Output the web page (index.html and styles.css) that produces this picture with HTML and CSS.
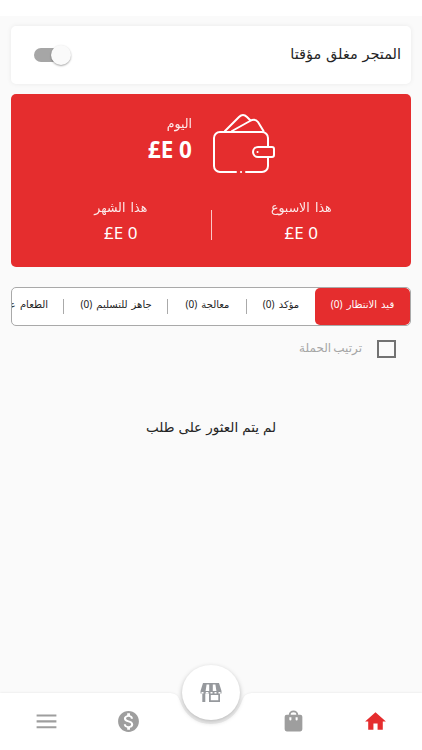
FILE: index.html
```html
<!DOCTYPE html>
<html lang="ar" dir="rtl">
<head>
<meta charset="utf-8">
<meta name="viewport" content="width=device-width, initial-scale=1">
<title>المتجر</title>
<link rel="stylesheet" href="styles.css">
</head>
<body>
<div class="statusbar"></div>
<main class="content">
  <section class="card store">
    <span class="store-title">المتجر مغلق مؤقتا</span>
    <span class="switch"><span class="thumb"></span></span>
  </section>
  <section class="earnings">
    <div class="today">
      <svg class="wallet" viewBox="0 0 64 62" fill="none" stroke="#fff" stroke-width="2" stroke-linecap="round" stroke-linejoin="round">
        <path d="M24 59H8a6 6 0 0 1-6-6V25a6 6 0 0 1 6-6h42a6 6 0 0 1 6 6v8M56 45v8a6 6 0 0 1-6 6H34"/>
        <path d="M29 59h.1M45.500 39h.1"/>
        <path d="M60 34H46a5 5 0 0 0 0 10h14q2 0 2-2v-6q0-2-2-2z"/>
        <path d="M13 18 27 4q4-4 8 0l3.500 3.500M20 18 38 8q5-3 8 1L51.500 18"/>
      </svg>
      <div class="today-text">
        <span class="label label-today">اليوم</span>
        <span class="amount big" dir="ltr">£E 0</span>
      </div>
    </div>
    <div class="periods">
      <div class="period">
        <span class="label label-week">هذا الاسبوع</span>
        <span class="amount" dir="ltr">£E 0</span>
      </div>
      <div class="rule"></div>
      <div class="period">
        <span class="label label-month">هذا الشهر</span>
        <span class="amount" dir="ltr">£E 0</span>
      </div>
    </div>
  </section>
  <nav class="tabs">
    <div class="tab active"><span>قيد الانتظار (0)</span></div>
    <div class="tab confirmed"><span>مؤكد (0)</span></div>
    <div class="tab processing"><span>معالجة (0)</span></div>
    <div class="tab ready"><span>جاهز للتسليم (0)</span></div>
    <div class="tab food"><span>الطعام على الطريق (0)</span></div>
  </nav>
  <div class="campaign">
    <span class="checkbox"></span>
    <span class="campaign-label">ترتيب الحملة</span>
  </div>
  <p class="empty">لم يتم العثور على طلب</p>
</main>
<footer class="bottom">
  <svg class="bottom-shape" viewBox="0 0 422 58"><path d="M0 1H168C175 1 178 3 180 9C185 23 196 32 211 32S237 23 242 9C244 3 247 1 254 1H422V58H0z"/></svg>
  <div class="items">
    <div class="item active-item"><svg viewBox="0 0 24 24"><path d="M10 20v-6h4v6h5v-8h3L12 3 2 12h3v8z"/></svg></div>
    <div class="item"><svg viewBox="0 0 24 24"><path fill-rule="evenodd" d="M18.500 5.500H16.500a4.500 4 0 0 0-9 0H5.500Q3.500 5.500 3.500 7.500v12q0 2 2 2h13q2 0 2-2V7.500q0-2-2-2zM12 3.200A2.700 2.300 0 0 1 14.700 5.500H9.300A2.700 2.300 0 0 1 12 3.200zM10 10a1 1 0 0 1-2 0V8h2zm6 0a1 1 0 0 1-2 0V8h2z"/></svg></div>
    <div class="item"></div>
    <div class="item"><svg viewBox="0 0 24 24"><path d="M12 2C6.480 2 2 6.480 2 12s4.480 10 10 10 10-4.480 10-10S17.520 2 12 2zm1.410 16.090V20h-2.670v-1.930c-1.710-.36-3.160-1.460-3.270-3.400h1.960c.1 1.050.82 1.870 2.650 1.870 1.960 0 2.400-.98 2.400-1.590 0-.83-.44-1.610-2.670-2.140-2.480-.6-4.180-1.620-4.180-3.670 0-1.720 1.390-2.840 3.110-3.210V4h2.670v1.950c1.860.45 2.790 1.860 2.850 3.390H14.300c-.05-1.110-.64-1.870-2.220-1.870-1.500 0-2.400.68-2.400 1.640 0 .84.65 1.390 2.670 1.910s4.180 1.390 4.180 3.910c-.01 1.830-1.380 2.830-3.120 3.160z"/></svg></div>
    <div class="item"><svg viewBox="0 0 24 24"><path d="M2.500 5.200h19v2h-19zM2.500 10.900h19v2h-19zM2.500 16.500h19v2h-19z"/></svg></div>
  </div>
  <div class="fab">
    <svg viewBox="0 0 22 20"><path d="M3 0h16l2.500 8v2.500h-21V8z"/><path d="M2.300 10h3v9h-3zM9 10h11v9H9z"/><path class="cut" d="M6.600 1.500h2.600V8H5.600zM12.800 1.500h2.600L16.400 8h-3.600zM10.800 12h7.500v5.200h-7.500zM1.500 9h2v1.500h-2zM5.800 9h2.600v1.500H5.800zM10.500 9h2v1.500h-2zM14.500 9h2v1.500h-2zM18.500 9h2v1.500h-2z"/></svg>
  </div>
</footer>
</body>
</html>
```
FILE: styles.css
```css
* { box-sizing: border-box; }
body {
  margin: 0;
  height: 750px;
  overflow: hidden;
  display: flex;
  flex-direction: column;
  background: #fafafa;
  color: #242424;
  font-family: "Noto Sans", "DejaVu Sans", sans-serif;
}
.statusbar { height: 16px; background: #fff; flex: none; }
.content { flex: 1; padding: 10px 11px 0; }
.card {
  height: 58px;
  border-radius: 5px;
  background: #fff;
  box-shadow: 0 0 5px rgba(0, 0, 0, .07);
}
.store { display: flex; justify-content: space-between; padding: 0 10px 0 23px; }
.store-title { font-size: 14.5px; line-height: 20px; margin-top: 17px; word-spacing: 1px; white-space: nowrap; }
.switch {
  width: 36px; height: 14px; margin-top: 22px;
  border-radius: 7px; background: #a6a6a6;
  display: flex; align-items: center;
}
.thumb {
  width: 20px; height: 20px; flex: none;
  margin-right: -1px;
  border-radius: 50%; background: #fafafa;
  box-shadow: 0 1px 2px rgba(0, 0, 0, .35);
}
.earnings {
  height: 173px; margin-top: 10px;
  border-radius: 5px; background: #e52d2e; color: #fff;
  padding-top: 19px;
}
.today { height: 85px; display: flex; gap: 20px; padding-right: 135px; }
.wallet { width: 64px; height: 62px; flex: none; }
.today-text { display: flex; flex-direction: column; align-items: flex-start; }
.label { font-size: 12.5px; line-height: 20px; opacity: .9; word-spacing: 2px; white-space: nowrap; }
.amount { font-size: 17px; line-height: 24px; }
.label-today { padding-top: 1px; line-height: 19px; }
.big { font-size: 22.5px; font-weight: 700; line-height: 34px; }
.periods { display: flex; align-items: center; padding: 0 20px; }
.period { flex: 1; display: flex; flex-direction: column; align-items: center; gap: 3px; }
.rule { width: 1px; height: 30px; background: #f9c8c8; margin-top: 6px; }
.tabs {
  height: 39px; margin-top: 20px;
  display: flex;
  border: 1px solid #a9a9a9; border-radius: 5px;
  background: #fff; overflow: hidden;
}
.tab {
  flex: none; display: flex; justify-content: center; align-items: center;
  font-size: 10px; word-spacing: 1.5px; white-space: nowrap; position: relative; padding-bottom: 5px;
}
.tab + .tab + .tab::before {
  content: ""; position: absolute; right: 0; top: 11px;
  width: 1px; height: 15px; background: #aaa;
}
.active { width: 95px; border-radius: 5px; background: #e52d2e; color: #fff; }
.confirmed { width: 68px; }
.processing { width: 79px; }
.ready { width: 104px; }
.food { justify-content: flex-start; padding-right: 16px; }
.campaign { display: flex; gap: 15px; padding: 14px 15px 0 0; }
.checkbox { width: 19px; height: 18px; border: 2px solid #727272; }
.campaign-label { font-size: 12px; line-height: 16px; word-spacing: -1px; color: #a6a6a6; }
.empty { margin: 59px 0 0; text-align: center; font-size: 13.5px; line-height: 20px; word-spacing: .5px; }
.bottom { height: 58px; flex: none; position: relative; }
.bottom-shape { position: absolute; inset: 0; width: 422px; height: 58px; fill: #fff; filter: drop-shadow(0 0 1px rgba(0, 0, 0, .09)); }
.items { position: relative; display: flex; height: 58px; padding: 0 5px; }
.item { flex: 1; display: flex; justify-content: center; align-items: center; }
.item svg { width: 25px; height: 25px; fill: #9e9e9e; }
.active-item svg { fill: #e52d2e; }
.fab {
  position: absolute; left: 182px; top: -27px;
  width: 58px; height: 55px; border-radius: 50%;
  background: #fff; display: flex; align-items: center; justify-content: center;
  box-shadow: 0 2px 5px rgba(0, 0, 0, .28);
}
.fab svg { width: 22px; height: 20px; fill: #96999d; }
.fab .cut { fill: #fff; }
```
